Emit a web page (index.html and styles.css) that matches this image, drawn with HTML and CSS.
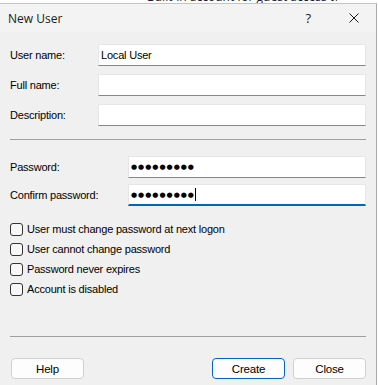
FILE: index.html
```html
<!DOCTYPE html>
<html lang="en">
<head>
  <meta charset="UTF-8" />
  <meta name="viewport" content="width=device-width, initial-scale=1.0"/>
  <title>New User</title>
  <link rel="stylesheet" href="styles.css">
</head>
<body>
  <div class="backdrop">
    <span>Built-in account for guest access to the</span>
  </div>

  <div class="dialog">
    <div class="titlebar">
      <span class="title">New User</span>
      <span class="help-btn">?</span>
      <span class="close-btn">
        <svg width="10" height="10" viewBox="0 0 10 10">
          <path d="M0.5 0.5 L9.5 9.5 M9.5 0.5 L0.5 9.5" stroke="#1a1a1a" stroke-width="1" fill="none"/>
        </svg>
      </span>
    </div>

    <div class="content">
      <div class="fields">
        <label for="username">User name:</label>
        <input type="text" id="username" value="Local User" />

        <label for="fullname">Full name:</label>
        <input type="text" id="fullname" />

        <label for="description">Description:</label>
        <input type="text" id="description" />
      </div>

      <div class="divider"></div>

      <div class="fields pw">
        <label for="password">Password:</label>
        <div class="field"><span class="dots">●●●●●●●●●</span></div>

        <label for="confirm">Confirm password:</label>
        <div class="field active"><span class="dots">●●●●●●●●●</span><span class="caret"></span></div>
      </div>

      <div class="options">
        <label class="check"><span class="box"></span>User must change password at next logon</label>
        <label class="check"><span class="box"></span>User cannot change password</label>
        <label class="check"><span class="box"></span>Password never expires</label>
        <label class="check"><span class="box"></span>Account is disabled</label>
      </div>

      <div class="divider bottom"></div>

      <div class="buttons">
        <button type="button">Help</button>
        <span class="spacer"></span>
        <button type="button" class="default">Create</button>
        <button type="button">Close</button>
      </div>
    </div>
  </div>
</body>
</html>
```
FILE: styles.css
```css
body {
  margin: 0;
  background-color: #fff;
  font-family: 'Liberation Sans', Arial, sans-serif;
  font-size: 11px;
  letter-spacing: -0.2px;
  color: #000;
  overflow: hidden;
}

.backdrop {
  height: 3px;
  overflow: hidden;
  padding-left: 147px;
  color: #1c1c3c;
  font-family: 'Open Sans', sans-serif;
  font-size: 12px;
  line-height: 13px;
  letter-spacing: 0;
}

.backdrop span {
  display: block;
  width: 190px;
  overflow: hidden;
  margin-top: -10px;
  white-space: nowrap;
}

.dialog {
  width: 376px;
  height: 382px;
  background-color: #f0f0f0;
  border-top: 1px solid #c4c4c4;
  border-right: 1px solid #a8a8a8;
}

.titlebar {
  height: 28px;
  background-color: #f3f3f3;
  display: flex;
  align-items: center;
  padding-left: 8px;
  letter-spacing: 0;
}

.title {
  font-family: 'Open Sans', sans-serif;
  font-size: 12px;
  color: #1a1a1a;
  flex: 1;
}

.help-btn {
  font-family: 'Open Sans', sans-serif;
  font-size: 13px;
  color: #1a1a1a;
  margin-right: 38px;
}

.close-btn {
  display: flex;
  margin-right: 17px;
}

.content {
  padding: 12px 10px 0 10px;
}

.fields {
  display: grid;
  grid-template-columns: 88px 1fr;
  row-gap: 8px;
  align-items: center;
}

.fields.pw {
  grid-template-columns: 118px 1fr;
  row-gap: 6px;
  margin-top: 16px;
}

input, .field {
  height: 22px;
  box-sizing: border-box;
  border: 1px solid #e6e6e6;
  border-bottom: 1px solid #878787;
  background-color: #fff;
  font-family: 'Liberation Sans', Arial, sans-serif;
  font-size: 11px;
  letter-spacing: -0.2px;
  padding: 0 2px;
  margin: 0;
  outline: none;
}

.field {
  display: flex;
  align-items: center;
}

.field.active {
  border-bottom: 2px solid #0067c0;
}

.dots {
  font-family: 'DejaVu Sans', sans-serif;
  font-size: 7px;
  letter-spacing: 1px;
  color: #000;
}

.caret {
  width: 1px;
  height: 13px;
  background-color: #000;
  margin-left: 0;
}

.divider {
  height: 1px;
  background-color: #a0a0a0;
  margin-top: 13px;
}

.divider.bottom {
  margin-top: 37px;
}

.options {
  display: flex;
  flex-direction: column;
  margin-top: 13px;
}

.check {
  display: flex;
  align-items: center;
  height: 20px;
  white-space: nowrap;
}

.box {
  width: 13px;
  height: 13px;
  box-sizing: border-box;
  border: 1px solid #333;
  border-radius: 3px;
  background-color: #f7f7f7;
  margin-right: 4px;
}

.buttons {
  display: flex;
  gap: 8px;
  margin-top: 21px;
  padding-left: 1px;
}

.spacer {
  flex: 1;
}

button {
  width: 73px;
  height: 21px;
  box-sizing: border-box;
  border: 1px solid #d0d0d0;
  border-radius: 4px;
  background-color: #fdfdfd;
  font-family: 'Liberation Sans', Arial, sans-serif;
  font-size: 11.5px;
  letter-spacing: -0.2px;
  color: #000;
  padding: 0;
}

button.default {
  border-color: #0067c0;
}
```
